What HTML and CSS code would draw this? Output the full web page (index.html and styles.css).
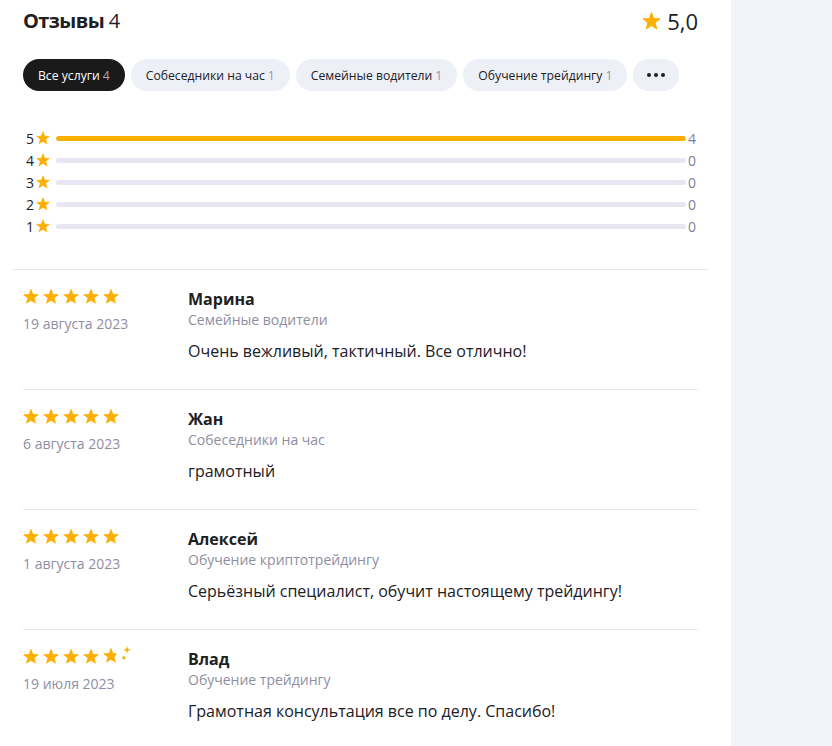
FILE: index.html
```html
<!DOCTYPE html>
<html lang="ru">
<head>
<meta charset="utf-8">
<title>Отзывы</title>
<link rel="stylesheet" href="styles.css">
</head>
<body>
<svg width="0" height="0" class="defs">
  <defs>
    <symbol id="star" viewBox="-0.6 -0.6 21.2 19.8">
      <polygon points="10,0 12.47,6.6 19.51,6.91 13.99,11.3 15.88,18.09 10,14.2 4.12,18.09 6.01,11.3 0.49,6.91 7.53,6.6" fill="currentColor" stroke="currentColor" stroke-width="1.1" stroke-linejoin="round"/>
    </symbol>
    <clipPath id="cut">
      <polygon points="0,-2 13.2,-2 13.2,6.2 11.6,9.6 15,17 0,17"/>
    </clipPath>
  </defs>
</svg>
<main class="page">
  <header class="head">
    <h1 class="title">Отзывы <span class="title-count">4</span></h1>
    <div class="total">
      <svg class="total-star"><use href="#star"/></svg>
      <span class="total-value">5,0</span>
    </div>
  </header>

  <nav class="pills">
    <button class="pill pill-active">Все услуги <span class="pill-count">4</span></button>
    <button class="pill">Собеседники на час <span class="pill-count">1</span></button>
    <button class="pill">Семейные водители <span class="pill-count">1</span></button>
    <button class="pill">Обучение трейдингу <span class="pill-count">1</span></button>
    <button class="pill pill-more"><span class="dot"></span><span class="dot"></span><span class="dot"></span></button>
  </nav>

  <section class="dist">
    <div class="dist-row">
      <span class="dist-num">5</span><svg class="dist-star"><use href="#star"/></svg>
      <span class="bar"><span class="bar-fill" style="width:100%"></span></span>
      <span class="dist-count">4</span>
    </div>
    <div class="dist-row">
      <span class="dist-num">4</span><svg class="dist-star"><use href="#star"/></svg>
      <span class="bar"></span>
      <span class="dist-count">0</span>
    </div>
    <div class="dist-row">
      <span class="dist-num">3</span><svg class="dist-star"><use href="#star"/></svg>
      <span class="bar"></span>
      <span class="dist-count">0</span>
    </div>
    <div class="dist-row">
      <span class="dist-num">2</span><svg class="dist-star"><use href="#star"/></svg>
      <span class="bar"></span>
      <span class="dist-count">0</span>
    </div>
    <div class="dist-row">
      <span class="dist-num">1</span><svg class="dist-star"><use href="#star"/></svg>
      <span class="bar"></span>
      <span class="dist-count">0</span>
    </div>
  </section>

  <hr class="divider">

  <section class="reviews">
    <article class="review">
      <div class="review-side">
        <div class="stars">
          <svg class="star"><use href="#star"/></svg><svg class="star"><use href="#star"/></svg><svg class="star"><use href="#star"/></svg><svg class="star"><use href="#star"/></svg><svg class="star"><use href="#star"/></svg>
        </div>
        <div class="date">19 августа 2023</div>
      </div>
      <div class="review-body">
        <div class="name">Марина</div>
        <div class="service">Семейные водители</div>
        <p class="text">Очень вежливый, тактичный. Все отлично!</p>
      </div>
    </article>
    <article class="review">
      <div class="review-side">
        <div class="stars">
          <svg class="star"><use href="#star"/></svg><svg class="star"><use href="#star"/></svg><svg class="star"><use href="#star"/></svg><svg class="star"><use href="#star"/></svg><svg class="star"><use href="#star"/></svg>
        </div>
        <div class="date">6 августа 2023</div>
      </div>
      <div class="review-body">
        <div class="name">Жан</div>
        <div class="service">Собеседники на час</div>
        <p class="text">грамотный</p>
      </div>
    </article>
    <article class="review">
      <div class="review-side">
        <div class="stars">
          <svg class="star"><use href="#star"/></svg><svg class="star"><use href="#star"/></svg><svg class="star"><use href="#star"/></svg><svg class="star"><use href="#star"/></svg><svg class="star"><use href="#star"/></svg>
        </div>
        <div class="date">1 августа 2023</div>
      </div>
      <div class="review-body">
        <div class="name">Алексей</div>
        <div class="service">Обучение криптотрейдингу</div>
        <p class="text">Серьёзный специалист, обучит настоящему трейдингу!</p>
      </div>
    </article>
    <article class="review">
      <div class="review-side">
        <div class="stars">
          <svg class="star"><use href="#star"/></svg><svg class="star"><use href="#star"/></svg><svg class="star"><use href="#star"/></svg><svg class="star"><use href="#star"/></svg>
          <svg class="star star-last" viewBox="0 0 30 16"><g clip-path="url(#cut)"><use href="#star" width="16" height="15"/></g><path d="M24 -2.2 L24.9 0.9 L28 1.8 L24.9 2.7 L24 5.8 L23.1 2.7 L20 1.8 L23.1 0.9 Z" fill="currentColor"/><rect x="19.4" y="8.4" width="2.8" height="2.8" transform="rotate(45 20.8 9.8)" fill="currentColor"/></svg>
        </div>
        <div class="date">19 июля 2023</div>
      </div>
      <div class="review-body">
        <div class="name">Влад</div>
        <div class="service">Обучение трейдингу</div>
        <p class="text">Грамотная консультация все по делу. Спасибо!</p>
      </div>
    </article>
  </section>
</main>
</body>
</html>
```

FILE: styles.css
```css
* { box-sizing: border-box; }

html, body {
  margin: 0;
  padding: 0;
}

body {
  background: #f2f3f8;
  font-family: "Open Sans", "Noto Sans", "Liberation Sans", sans-serif;
  color: #21201f;
  min-height: 746px;
}

.defs { position: absolute; width: 0; height: 0; }

.page {
  width: 731px;
  min-height: 746px;
  background: #ffffff;
  padding: 6px 33px 0 23px;
}

.head {
  display: flex;
  align-items: center;
  justify-content: space-between;
  height: 30px;
}

.title {
  margin: 0;
  font-size: 20px;
  font-weight: 700;
  line-height: 30px;
  letter-spacing: -0.6px;
}

.title-count {
  font-weight: 400;
}

.total {
  display: flex;
  align-items: center;
  gap: 6px;
}

.total-star {
  width: 19px;
  height: 18px;
  color: #fcaf00;
}

.total-value {
  font-size: 22px;
  font-weight: 500;
  line-height: 30px;
}

.pills {
  display: flex;
  gap: 6px;
  margin-top: 23px;
}

.pill {
  height: 32px;
  border: none;
  border-radius: 16px;
  background: #eef0f7;
  color: #21201f;
  font-family: inherit;
  font-size: 12.2px;
  padding: 0 15px;
  white-space: nowrap;
  display: flex;
  align-items: center;
  gap: 3px;
  cursor: pointer;
}

.pill-count {
  color: #8f95b2;
}

.pill-active {
  background: #1a1a1a;
  color: #ffffff;
}

.pill-active .pill-count {
  color: #a8a8b8;
}

.pill-more {
  width: 46px;
  justify-content: center;
  gap: 3px;
  padding: 0;
}

.dot {
  width: 4px;
  height: 4px;
  border-radius: 50%;
  background: #21201f;
}

.dist {
  margin-top: 36px;
  display: flex;
  flex-direction: column;
}

.dist-row {
  display: flex;
  align-items: center;
  height: 22px;
}

.dist-num {
  width: 11px;
  text-align: right;
  font-size: 14px;
  color: #21201f;
}

.dist-star {
  width: 14px;
  height: 14px;
  color: #fcaf00;
  margin-left: 2px;
  margin-right: 6px;
}

.bar {
  flex: 1;
  height: 5px;
  border-radius: 3px;
  background: #e7e6f2;
  overflow: hidden;
}

.bar-fill {
  display: block;
  height: 100%;
  background: #fcaf00;
  border-radius: 3px;
}

.dist-count {
  width: 10px;
  margin-left: 2px;
  font-size: 14px;
  color: #7b80a0;
  line-height: 22px;
  padding-top: 2px;
}

.divider {
  margin: 32px -10px 0 -10px;
  border: none;
  border-top: 1px solid #e6e5f0;
  height: 0;
}

.reviews {
  display: flex;
  flex-direction: column;
}

.review {
  display: flex;
  padding: 18px 0 27px;
  border-bottom: 1px solid #e6e5f0;
}

.review:last-child {
  border-bottom: none;
}

.review-side {
  width: 165px;
  flex-shrink: 0;
}

.stars {
  display: flex;
  gap: 4px;
  height: 16px;
  align-items: center;
}

.star {
  width: 16px;
  height: 15px;
  color: #fcaf00;
  overflow: visible;
}

.star-last {
  width: 30px;
  height: 16px;
}

.date {
  margin-top: 10px;
  font-size: 14px;
  color: #8e8ea3;
  line-height: 20px;
}

.review-body {
  flex: 1;
}

.name {
  font-size: 16px;
  font-weight: 700;
  line-height: 22px;
}

.service {
  font-size: 14px;
  color: #8e8ea3;
  line-height: 20px;
}

.text {
  margin: 10px 0 0;
  font-size: 16px;
  line-height: 22px;
}
```
